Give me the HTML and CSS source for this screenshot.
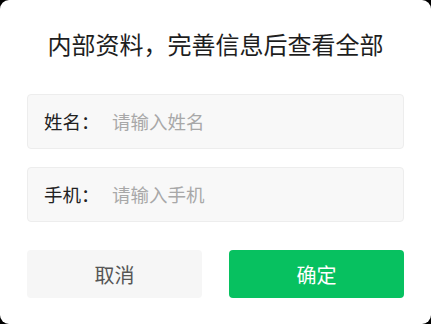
FILE: index.html
```html
<!DOCTYPE html>
<html lang="zh-CN">
<head>
<meta charset="utf-8">
<link rel="stylesheet" href="styles.css">
</head>
<body>
<div class="dialog">
  <h1 class="title">内部资料，完善信息后查看全部</h1>
  <div class="fields">
    <label class="field">
      <span class="label">姓名：</span>
      <input class="input" type="text" placeholder="请输入姓名">
    </label>
    <label class="field">
      <span class="label">手机：</span>
      <input class="input" type="text" placeholder="请输入手机">
    </label>
  </div>
  <div class="actions">
    <button class="btn btn-cancel">取消</button>
    <button class="btn btn-ok">确定</button>
  </div>
</div>
</body>
</html>
```
FILE: styles.css
```css
* { box-sizing: border-box; }
html, body {
  margin: 0;
  padding: 0;
  background: #000;
  width: 431px;
  height: 324px;
  overflow: hidden;
}
body {
  font-family: "Noto Sans CJK SC", "Noto Sans", sans-serif;
}
.dialog {
  width: 431px;
  height: 324px;
  background: #fff;
  border-radius: 9px;
  padding: 29px 27px 0 27px;
}
.title {
  margin: 0;
  font-size: 24px;
  line-height: 30px;
  height: 30px;
  font-weight: 400;
  color: #1e1e1e;
  text-align: center;
  white-space: nowrap;
}
.fields {
  margin-top: 35px;
  display: flex;
  flex-direction: column;
  gap: 18px;
}
.field {
  display: flex;
  align-items: center;
  height: 55px;
  background: #f8f8f8;
  border: 1px solid #ededed;
  border-radius: 4px;
  padding: 0 0 2px 16px;
}
.label {
  font-size: 18.5px;
  color: #222;
  width: 68px;
  flex: none;
}
.input {
  flex: 1;
  border: none;
  background: transparent;
  outline: none;
  font-family: inherit;
  font-size: 18.5px;
  color: #222;
  padding: 0;
}
.input::placeholder {
  color: #a8a8a8;
}
.actions {
  margin-top: 28px;
  display: flex;
  gap: 27px;
}
.btn {
  flex: 1;
  height: 48px;
  border: none;
  border-radius: 4px;
  font-family: inherit;
  font-size: 20px;
  padding: 0;
}
.btn-cancel {
  background: #f6f6f6;
  color: #555;
}
.btn-ok {
  background: #07c160;
  color: #fff;
}
```
